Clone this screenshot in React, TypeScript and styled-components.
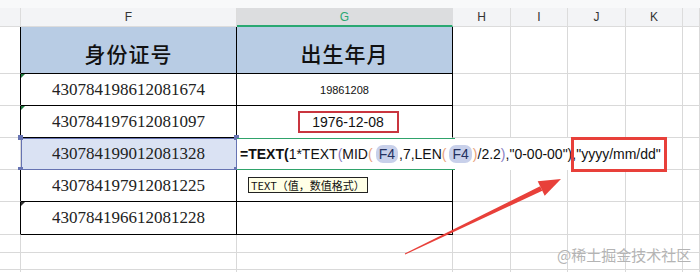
import React from 'react'
import styled, { createGlobalStyle } from 'styled-components'

const GlobalStyle = createGlobalStyle`
  html, body { margin: 0; padding: 0; background: #fff; }
  body { width: 700px; height: 272px; overflow: hidden; font-family: "Liberation Sans", Arial, sans-serif; }
`

const GRID = '#d9d9d9'
const INK = '#000'

const ids = [
  '430784198612081674',
  '430784197612081097',
  '430784199012081328',
  '430784197912081225',
  '430784196612081228'
]

export default function App() {
  return (
    <>
      <GlobalStyle />
      <Sheet>
        <TopStrip />
        <Grid>
          {/* column headers */}
          <ColHead />
          <ColHead>F</ColHead>
          <ColHead $active>G</ColHead>
          <ColHead>H</ColHead>
          <ColHead>I</ColHead>
          <ColHead>J</ColHead>
          <ColHead>K</ColHead>
          <ColHead />

          {/* row 1: titles */}
          <Cell $r={INK} />
          <TitleCell>身份证号</TitleCell>
          <TitleCell>出生年月</TitleCell>
          <Blanks n={5} />

          {/* row 2 */}
          <Cell $r={INK} />
          <IdCell $flag="#1f7a3e">{ids[0]}</IdCell>
          <Cell $r={INK} $b={INK}>
            <Small>19861208</Small>
          </Cell>
          <Blanks n={5} />

          {/* row 3 */}
          <Cell $r={INK} />
          <IdCell $flag="#1f7a3e">{ids[1]}</IdCell>
          <Cell $r={INK} $b="transparent">
            <DateBox>1976-12-08</DateBox>
          </Cell>
          <Blanks n={5} />

          {/* row 4: editing */}
          <Cell />
          <SelectedCell>
            {ids[2]}
            <Handle $x="left" $y="top" />
            <Handle $x="right" $y="top" />
            <Handle $x="left" $y="bottom" />
            <Handle $x="right" $y="bottom" />
          </SelectedCell>
          <EditCell>
            <Formula>
              <b>=TEXT(</b>1*TEXT<P $c="#8a7fc4">(</P>MID<P $c="#e9a27c">(</P>
              <Ref>F4</Ref>,7,LEN<P $c="#e9a27c">(</P>
              <Ref>F4</Ref>
              <P $c="#e9a27c">)</P>/2.2<P $c="#8a7fc4">)</P>,"0-00-00"),"yyyy/mm/dd"
            </Formula>
          </EditCell>
          <Blanks n={2} />

          {/* row 5 */}
          <Cell $r={INK} />
          <IdCell>{ids[3]}</IdCell>
          <Cell $r={INK} $b={INK} $start>
            <Tip>TEXT（值，数值格式）</Tip>
          </Cell>
          <Blanks n={5} />

          {/* row 6 */}
          <Cell $r={INK} />
          <IdCell $flag="#333">{ids[4]}</IdCell>
          <Cell $r={INK} $b={INK} />
          <Blanks n={5} />

          {/* rows 7-9 */}
          <Blanks n={24} />
        </Grid>

        <Callout />
        <Arrow viewBox="0 0 700 272" width={700} height={272}>
          <polygon points="404.8,253.6 405.2,254.4 542.3,190.7 540.1,186.3" fill="#e8403a" />
          <polygon points="561,179 537.7,181.3 544.7,195.7" fill="#e8403a" />
        </Arrow>
        <Watermark>@稀土掘金技术社区</Watermark>
      </Sheet>
    </>
  )
}

function Blanks({ n }: { n: number }) {
  return (
    <>
      {Array.from({ length: n }).map((_, i) => (
        <Cell key={i} />
      ))}
    </>
  )
}

const Sheet = styled.div`
  position: relative;
  width: 700px;
  height: 272px;
  overflow: hidden;
  background: #fff;
`

const TopStrip = styled.div`
  height: 8px;
  background: #f8f9fa;
`

const Grid = styled.div`
  display: grid;
  grid-template-columns: 21px 216px 216px 58px 57px 58px 57px 1fr;
  grid-template-rows: 19px 47px 32px 32px 32px 32px 33px 18px 17px 20px;
`

const Cell = styled.div<{ $bg?: string; $r?: string; $b?: string; $start?: boolean }>`
  box-sizing: border-box;
  position: relative;
  min-width: 0;
  display: flex;
  align-items: ${(p) => (p.$start ? 'flex-start' : 'center')};
  justify-content: ${(p) => (p.$start ? 'flex-start' : 'center')};
  background: ${(p) => p.$bg || '#fff'};
  border-right: 1px solid ${(p) => p.$r || GRID};
  border-bottom: 1px solid ${(p) => p.$b || GRID};
`

const ColHead = styled.div<{ $active?: boolean }>`
  box-sizing: border-box;
  display: flex;
  align-items: center;
  justify-content: center;
  background: ${(p) => (p.$active ? '#dcdddf' : '#f3f4f6')};
  border-right: 1px solid ${(p) => (p.$active ? '#dcdddf' : '#dcdcdc')};
  border-bottom: ${(p) => (p.$active ? '2px solid #2aa872' : '1px solid #dcdcdc')};
  font-size: 12px;
  color: ${(p) => (p.$active ? '#2aa872' : '#333')};
`

const TitleCell = styled(Cell).attrs({ $r: INK, $b: INK, $bg: '#b8cce4' })`
  padding-top: 5px;
  font-family: "Noto Sans CJK SC", sans-serif;
  font-size: 21px;
  font-weight: 500;
  letter-spacing: 1px;
  color: #111;
`

const IdCell = styled(Cell).attrs({ $r: INK, $b: INK })<{ $flag?: string }>`
  font-family: "Liberation Serif", "Times New Roman", serif;
  font-size: 17px;
  color: #222;
  &::before {
    content: '';
    display: ${(p) => (p.$flag ? 'block' : 'none')};
    position: absolute;
    left: 0;
    top: 0;
    border-top: 4px solid ${(p) => p.$flag};
    border-right: 4px solid transparent;
  }
`

const SelectedCell = styled(Cell).attrs({ $bg: '#dae2f3', $r: '#6673b2', $b: '#6673b2' })`
  font-family: "Liberation Serif", "Times New Roman", serif;
  font-size: 17px;
  color: #222;
  outline: 1px solid #6673b2;
  outline-offset: -1px;
`

const Handle = styled.span<{ $x: 'left' | 'right'; $y: 'top' | 'bottom' }>`
  position: absolute;
  width: 5px;
  height: 5px;
  background: #6673b2;
  ${(p) => p.$x}: -3px;
  ${(p) => p.$y}: -3px;
`

const Small = styled.span`
  font-size: 11px;
  color: #111;
`

const DateBox = styled.span`
  box-sizing: border-box;
  width: 101px;
  height: 22px;
  margin-left: 7px;
  border: 2px solid #c9353f;
  display: flex;
  align-items: center;
  justify-content: center;
  font-size: 14px;
  color: #111;
`

const EditCell = styled.div`
  grid-column: span 4;
  position: relative;
  z-index: 1;
  display: flex;
  align-items: center;
  padding-left: 3px;
  background:
    linear-gradient(#2fa36b, #2fa36b) left top / 218px 1px no-repeat,
    linear-gradient(#2fa36b, #2fa36b) left bottom / 218px 1px no-repeat,
    #fff;
  white-space: nowrap;
`

const Formula = styled.div`
  font-size: 14px;
  color: #111;
  background: #fff;
  padding-right: 2px;
  b {
    font-weight: 700;
  }
`

const P = styled.span<{ $c: string }>`
  color: ${(p) => p.$c};
`

const Ref = styled.span`
  display: inline-block;
  background: #c8d0ea;
  color: #24315f;
  border-radius: 7px;
  padding: 1px 3px;
  margin: 0 1px 0 3px;
`

const Tip = styled.span`
  margin: 7px 0 0 11px;
  padding: 0 2px;
  height: 14px;
  line-height: 14px;
  border: 1px solid #222;
  background: #ffffe6;
  font-family: "Noto Sans CJK SC", "Liberation Serif", serif;
  font-size: 11px;
  color: #111;
  white-space: nowrap;
`

const Callout = styled.div`
  position: absolute;
  left: 571px;
  top: 137px;
  width: 96px;
  height: 35px;
  box-sizing: border-box;
  border: 3px solid #e8403a;
  z-index: 2;
`

const Arrow = styled.svg`
  position: absolute;
  left: 0;
  top: 0;
  z-index: 3;
  pointer-events: none;
`

const Watermark = styled.div`
  position: absolute;
  left: 557px;
  top: 244px;
  z-index: 3;
  font-family: "Noto Sans CJK SC", sans-serif;
  font-size: 15px;
  color: #b4b4b4;
  white-space: nowrap;
`
